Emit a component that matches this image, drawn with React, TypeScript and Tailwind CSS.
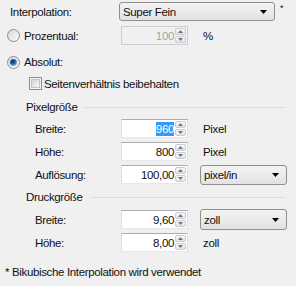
import React from "react";

function ComboArrow() {
  return (
    <svg width="7" height="4" viewBox="0 0 7 4" className="shrink-0">
      <path d="M0 0h7L3.5 4z" fill="#000" />
    </svg>
  );
}

function Combo({ value, className }: { value: string; className: string }) {
  return (
    <div
      className={`flex items-center justify-between rounded-[3px] border border-[#8e8f8f] bg-linear-to-b from-[#f4f4f4] to-[#e2e2e2] pl-[3px] pr-[7px] ${className}`}
    >
      <span>{value}</span>
      <ComboArrow />
    </div>
  );
}

function SpinArrow({ up }: { up?: boolean }) {
  return (
    <svg width="5" height="3" viewBox="0 0 5 3">
      <path d={up ? "M0 3h5L2.5 0z" : "M0 0h5L2.5 3z"} fill="#6b7684" />
    </svg>
  );
}

function Spin({
  value,
  disabled,
  selected,
}: {
  value: string;
  disabled?: boolean;
  selected?: boolean;
}) {
  return (
    <div
      className={`flex h-[19px] w-[67px] border ${
        disabled
          ? "border-[#cdcdcd] bg-[#f0f0f0] text-[#a3a3a3]"
          : "border-t-[#abadb3] border-x-[#dbdfe6] border-b-[#e3e9ef] bg-white"
      }`}
    >
      <div className="flex flex-1 items-center justify-end pr-[1px]">
        {selected ? (
          <span className="bg-[#3399ff] text-white">{value}</span>
        ) : (
          <span>{value}</span>
        )}
      </div>
      <div className="flex w-[12px] flex-col gap-px py-[1px] pr-px">
        <div className="flex flex-1 items-center justify-center rounded-[2px] border border-[#c9ccd1] bg-linear-to-b from-[#f7f7f7] to-[#e4e4e4]">
          <SpinArrow up />
        </div>
        <div className="flex flex-1 items-center justify-center rounded-[2px] border border-[#c9ccd1] bg-linear-to-b from-[#f7f7f7] to-[#e4e4e4]">
          <SpinArrow />
        </div>
      </div>
    </div>
  );
}

function Radio({ checked, id }: { checked?: boolean; id: string }) {
  return (
    <svg width="13" height="13" viewBox="0 0 13 13" className="shrink-0">
      <defs>
        <linearGradient id={`${id}-bg`} x1="0" y1="0" x2="1" y2="1">
          <stop offset="0" stopColor="#d6d6d6" />
          <stop offset="1" stopColor="#fdfdfd" />
        </linearGradient>
        <radialGradient id={`${id}-dot`} cx="0.4" cy="0.35" r="0.7">
          <stop offset="0" stopColor="#0e2c52" />
          <stop offset="0.55" stopColor="#2a6cb0" />
          <stop offset="1" stopColor="#8fd0f5" />
        </radialGradient>
      </defs>
      <circle cx="6.5" cy="6.5" r="6" fill={`url(#${id}-bg)`} stroke="#8b8b8b" />
      {checked && <circle cx="6.5" cy="6.5" r="3.6" fill={`url(#${id}-dot)`} />}
    </svg>
  );
}

function Checkbox() {
  return (
    <svg width="13" height="13" viewBox="0 0 13 13" className="shrink-0">
      <defs>
        <linearGradient id="cb-bg" x1="0" y1="0" x2="1" y2="1">
          <stop offset="0" stopColor="#d2d2d2" />
          <stop offset="1" stopColor="#fbfbfb" />
        </linearGradient>
      </defs>
      <rect x="0.5" y="0.5" width="12" height="12" fill="#f4f4f4" stroke="#8e8f8f" />
      <rect x="2.5" y="2.5" width="8" height="8" fill="url(#cb-bg)" stroke="#c4c4c4" />
    </svg>
  );
}

function GroupHeader({ title }: { title: string }) {
  return (
    <div className="flex h-[14px] items-center pl-[26px] pr-[10px]">
      <span>{title}</span>
      <div className="ml-[7px] h-px flex-1 bg-[#d5dfe5]" />
    </div>
  );
}

function FieldRow({
  label,
  children,
  className = "",
}: {
  label: string;
  children: React.ReactNode;
  className?: string;
}) {
  return (
    <div className={`flex h-[19px] items-center pl-[35px] ${className}`}>
      <span className="w-[86px]">{label}</span>
      {children}
    </div>
  );
}

export default function App() {
  return (
    <div className="h-[286px] w-[296px] overflow-hidden bg-[#f0f0f0] pt-[2px] font-['Liberation_Sans',Arial,sans-serif] text-[11.5px] leading-[14px] tracking-[-0.35px] text-[#111]">
      {/* Interpolation */}
      <div className="flex h-[19px] items-center pl-[10px]">
        <span className="w-[109px]">Interpolation:</span>
        <Combo value="Super Fein" className="h-[19px] w-[156px]" />
        <span className="ml-[5px] mt-[2px] self-start text-[9px] leading-[9px]">*</span>
      </div>

      {/* Prozentual */}
      <div className="mt-[5px] flex h-[19px] items-center pl-[7px]">
        <Radio id="r1" />
        <span className="ml-[4px] w-[97px]">Prozentual:</span>
        <Spin value="100" disabled />
        <span className="ml-[15px]">%</span>
      </div>

      {/* Absolut */}
      <div className="mt-[10px] flex h-[14px] items-center pl-[7px]">
        <Radio id="r2" checked />
        <span className="ml-[4px]">Absolut:</span>
      </div>

      <div className="mt-[7px] flex h-[15px] items-center pl-[29px]">
        <Checkbox />
        <span className="ml-[2px]">Seitenverhältnis beibehalten</span>
      </div>

      {/* Pixelgröße */}
      <div className="mt-[9px]">
        <GroupHeader title="Pixelgröße" />
      </div>
      <FieldRow label="Breite:" className="mt-[5px]">
        <Spin value="960" selected />
        <span className="ml-[15px]">Pixel</span>
      </FieldRow>
      <FieldRow label="Höhe:" className="mt-[4px]">
        <Spin value="800" />
        <span className="ml-[15px]">Pixel</span>
      </FieldRow>
      <FieldRow label="Auflösung:" className="mt-[4px]">
        <Spin value="100,00" />
        <Combo value="pixel/in" className="ml-[12px] h-[20px] w-[87px] pr-[5px]" />
      </FieldRow>

      {/* Druckgröße */}
      <div className="mt-[6px]">
        <GroupHeader title="Druckgröße" />
      </div>
      <FieldRow label="Breite:" className="mt-[6px]">
        <Spin value="9,60" />
        <Combo value="zoll" className="ml-[12px] h-[21px] w-[87px] pr-[5px]" />
      </FieldRow>
      <FieldRow label="Höhe:" className="mt-[4px]">
        <Spin value="8,00" />
        <span className="ml-[15px]">zoll</span>
      </FieldRow>

      <div className="mt-[13px] flex h-[14px] items-center pl-[5px]">
        * Bikubische Interpolation wird verwendet
      </div>
    </div>
  );
}
